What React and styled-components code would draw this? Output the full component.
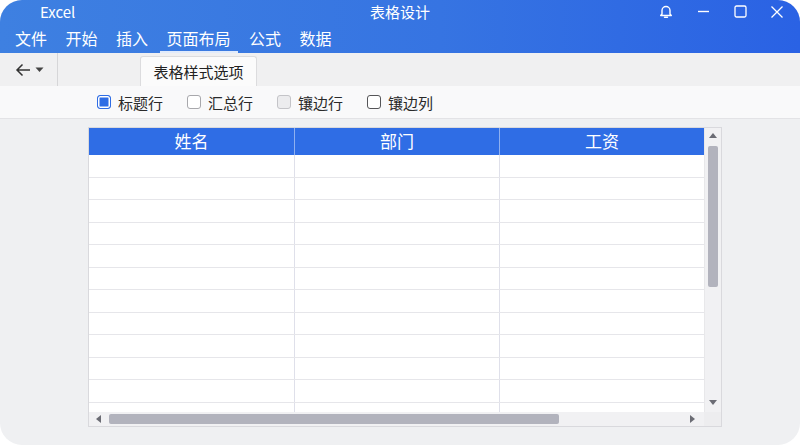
import React from "react";
import styled, { createGlobalStyle } from "styled-components";

const GlobalStyle = createGlobalStyle`
  html, body {
    margin: 0;
    padding: 0;
    background: #ffffff;
  }
  body {
    font-family: "Noto Sans CJK SC", "Noto Sans", sans-serif;
  }
`;

const Window = styled.div`
  width: 800px;
  height: 445px;
  border-radius: 22px;
  overflow: hidden;
  background: #eff0f2;
  display: flex;
  flex-direction: column;
`;

// title bar
const TitleBar = styled.div`
  height: 53px;
  background: linear-gradient(90deg, #3e80e1 0%, #3674e2 55%, #2a62e4 100%);
  color: #fff;
  display: flex;
  flex-direction: column;
  flex-shrink: 0;
`;
const TopRow = styled.div`
  height: 23px;
  display: grid;
  grid-template-columns: 1fr auto 1fr;
  align-items: center;
`;
const AppName = styled.div`
  font-size: 15px;
  padding-left: 40px;
  line-height: 22px;
`;
const Title = styled.div`
  font-size: 15px;
  line-height: 22px;
`;
const WinButtons = styled.div`
  display: flex;
  justify-content: flex-end;
  align-items: center;
  gap: 19px;
  padding-right: 14px;
`;
const WinBtn = styled.div`
  width: 18px;
  height: 18px;
  display: flex;
  align-items: center;
  justify-content: center;
`;
const MenuRow = styled.div`
  flex: 1;
  display: flex;
  align-items: stretch;
  padding-left: 8px;
  gap: 4.5px;
`;
const MenuItem = styled.div`
  font-size: 16px;
  line-height: 26px;
  padding: 0 7px;
  position: relative;
  display: flex;
  align-items: center;
  &::after {
    content: "";
    position: absolute;
    left: 0;
    right: 0;
    bottom: 0;
    height: 2px;
    background: ${(p) => (p.active ? "rgba(255,255,255,0.85)" : "transparent")};
  }
`;

// toolbar with tab
const TabBar = styled.div`
  height: 33px;
  background: #f0f0f1;
  display: flex;
  align-items: stretch;
  flex-shrink: 0;
`;
const BackBox = styled.div`
  width: 58px;
  display: flex;
  align-items: center;
  padding-left: 15px;
  gap: 4px;
  box-sizing: border-box;
  border-right: 1px solid #d6d6d8;
`;
const Tab = styled.div`
  margin: 3px 0 0 82px;
  width: 117px;
  box-sizing: border-box;
  background: #fbfbfb;
  border: 1px solid #dcdcde;
  border-bottom: none;
  border-radius: 3px 3px 0 0;
  font-size: 15px;
  color: #222;
  display: flex;
  align-items: center;
  justify-content: center;
`;

// ribbon options
const Ribbon = styled.div`
  height: 32px;
  background: #f9f9fa;
  border-bottom: 1px solid #e3e3e6;
  display: flex;
  align-items: center;
  padding-left: 97px;
  gap: 24px;
  flex-shrink: 0;
`;
const Option = styled.label`
  display: flex;
  align-items: center;
  gap: 7px;
  font-size: 15px;
  color: #2a2a2a;
`;
const Box = styled.span`
  width: 14px;
  height: 14px;
  box-sizing: border-box;
  border-radius: 3px;
  border: 1.5px solid ${(p) => p.border};
  background: ${(p) => p.fill};
  box-shadow: ${(p) => (p.checked ? "inset 0 0 0 1.5px #ffffff" : "none")};
`;

// sheet area
const Body = styled.div`
  flex: 1;
  padding: 8px 0 0 88px;
`;
const Sheet = styled.div`
  width: 634px;
  height: 300px;
  box-sizing: border-box;
  border: 1px solid #d9d9dd;
  background: #fff;
  display: grid;
  grid-template-columns: 1fr 17px;
  grid-template-rows: 1fr 14px;
`;
const Grid = styled.div`
  overflow: hidden;
  display: flex;
  flex-direction: column;
`;
const HeaderRow = styled.div`
  height: 27px;
  flex-shrink: 0;
  background: #2f6de5;
  display: grid;
  grid-template-columns: repeat(3, 1fr);
`;
const HeadCell = styled.div`
  color: #fff;
  font-size: 17px;
  padding-bottom: 3px;
  box-sizing: border-box;
  display: flex;
  align-items: center;
  justify-content: center;
  border-left: ${(p) => (p.first ? "none" : "1px solid #8fb0f0")};
`;
const Row = styled.div`
  height: 22.5px;
  flex-shrink: 0;
  box-sizing: border-box;
  border-bottom: 1px solid #e6e6ea;
  display: grid;
  grid-template-columns: repeat(3, 1fr);
`;
const Cell = styled.div`
  border-left: ${(p) => (p.first ? "none" : "1px solid #dfe0ea")};
`;
const VScroll = styled.div`
  background: #f1f1f3;
  border-left: 1px solid #e8e8ea;
  display: flex;
  flex-direction: column;
  align-items: center;
  padding: 4px 0 6px;
  box-sizing: border-box;
`;
const VThumb = styled.div`
  width: 10px;
  height: 141px;
  margin-top: 7px;
  border-radius: 2px;
  background: #b2b3bd;
`;
const Spacer = styled.div`
  flex: 1;
`;
const HScroll = styled.div`
  background: #f1f1f3;
  display: flex;
  align-items: center;
  padding: 0 8px 0 6px;
`;
const HThumb = styled.div`
  width: 450px;
  height: 10px;
  margin-left: 7px;
  border-radius: 2px;
  background: #b2b3bd;
`;
const Corner = styled.div`
  background: #ededef;
`;

const Tri = ({ dir }) => {
  const pts = {
    up: "0,6 4,1 8,6",
    down: "0,1 4,6 8,1",
    left: "6,0 1,4 6,8",
    right: "1,0 6,4 1,8",
  }[dir];
  const vertical = dir === "up" || dir === "down";
  return (
    <svg width={vertical ? 8 : 7} height={vertical ? 7 : 8} viewBox={vertical ? "0 0 8 7" : "0 0 7 8"}>
      <polygon points={pts} fill="#6b6c74" />
    </svg>
  );
};

const columns = ["姓名", "部门", "工资"];
const rows = Array.from({ length: 12 });

const App = () => {
  return (
    <>
      <GlobalStyle />
      <Window>
        <TitleBar>
          <TopRow>
            <AppName>Excel</AppName>
            <Title>表格设计</Title>
            <WinButtons>
              <WinBtn>
                <svg width="14" height="15" viewBox="0 0 14 15" fill="none" stroke="#fff" strokeWidth="1.4">
                  <path d="M3 10V6.5a4 4 0 0 1 8 0V10l1.3 1.5H1.7Z" strokeLinejoin="round" />
                  <path d="M5.5 13.3h3" strokeLinecap="round" />
                </svg>
              </WinBtn>
              <WinBtn>
                <svg width="13" height="13" viewBox="0 0 13 13" stroke="#fff" strokeWidth="1.4">
                  <path d="M1 6.5h11" />
                </svg>
              </WinBtn>
              <WinBtn>
                <svg width="13" height="13" viewBox="0 0 13 13" fill="none" stroke="#fff" strokeWidth="1.3">
                  <rect x="1" y="1" width="11" height="11" rx="1.5" />
                </svg>
              </WinBtn>
              <WinBtn>
                <svg width="14" height="14" viewBox="0 0 14 14" stroke="#fff" strokeWidth="1.3">
                  <path d="M1.5 1.5l11 11M12.5 1.5l-11 11" />
                </svg>
              </WinBtn>
            </WinButtons>
          </TopRow>
          <MenuRow>
            <MenuItem>文件</MenuItem>
            <MenuItem>开始</MenuItem>
            <MenuItem>插入</MenuItem>
            <MenuItem active>页面布局</MenuItem>
            <MenuItem>公式</MenuItem>
            <MenuItem>数据</MenuItem>
          </MenuRow>
        </TitleBar>

        <TabBar>
          <BackBox>
            <svg width="16" height="14" viewBox="0 0 16 14" fill="none" stroke="#333" strokeWidth="1.5">
              <path d="M15 7H2M7.5 1.5L2 7l5.5 5.5" />
            </svg>
            <svg width="9" height="6" viewBox="0 0 9 6">
              <polygon points="0.5,0.5 8.5,0.5 4.5,5" fill="#444" />
            </svg>
          </BackBox>
          <Tab>表格样式选项</Tab>
        </TabBar>

        <Ribbon>
          <Option>
            <Box checked border="#2f6de5" fill="#2f6de5" />
            标题行
          </Option>
          <Option>
            <Box border="#a8a8ac" fill="#ffffff" />
            汇总行
          </Option>
          <Option>
            <Box border="#c4c4c8" fill="#ececee" />
            镶边行
          </Option>
          <Option>
            <Box border="#555558" fill="#ffffff" />
            镶边列
          </Option>
        </Ribbon>

        <Body>
          <Sheet>
            <Grid>
              <HeaderRow>
                {columns.map((c, i) => (
                  <HeadCell key={c} first={i === 0}>
                    {c}
                  </HeadCell>
                ))}
              </HeaderRow>
              {rows.map((_, r) => (
                <Row key={r}>
                  {columns.map((c, i) => (
                    <Cell key={c} first={i === 0} />
                  ))}
                </Row>
              ))}
            </Grid>
            <VScroll>
              <Tri dir="up" />
              <VThumb />
              <Spacer />
              <Tri dir="down" />
            </VScroll>
            <HScroll>
              <Tri dir="left" />
              <HThumb />
              <Spacer />
              <Tri dir="right" />
            </HScroll>
            <Corner />
          </Sheet>
        </Body>
      </Window>
    </>
  );
};

export default App;
